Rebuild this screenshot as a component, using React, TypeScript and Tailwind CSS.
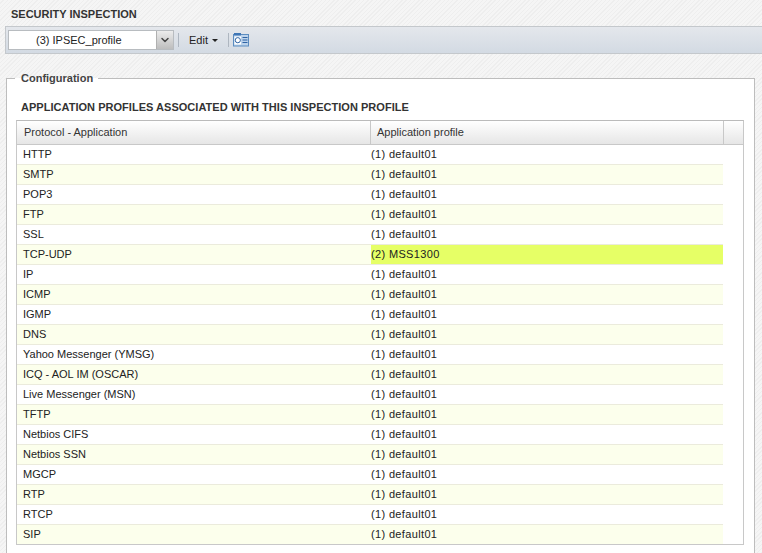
import { ChevronDown } from "lucide-react"

const rows = [
  ["HTTP", "(1) default01"],
  ["SMTP", "(1) default01"],
  ["POP3", "(1) default01"],
  ["FTP", "(1) default01"],
  ["SSL", "(1) default01"],
  ["TCP-UDP", "(2) MSS1300"],
  ["IP", "(1) default01"],
  ["ICMP", "(1) default01"],
  ["IGMP", "(1) default01"],
  ["DNS", "(1) default01"],
  ["Yahoo Messenger (YMSG)", "(1) default01"],
  ["ICQ - AOL IM (OSCAR)", "(1) default01"],
  ["Live Messenger (MSN)", "(1) default01"],
  ["TFTP", "(1) default01"],
  ["Netbios CIFS", "(1) default01"],
  ["Netbios SSN", "(1) default01"],
  ["MGCP", "(1) default01"],
  ["RTP", "(1) default01"],
  ["RTCP", "(1) default01"],
  ["SIP", "(1) default01"],
]

function ProfileIcon() {
  return (
    <svg width="16" height="14" viewBox="0 0 16 14" className="shrink-0">
      <rect x="0.5" y="1.5" width="15" height="11.5" fill="#bcd3ec" stroke="#5b8cc0" />
      <rect x="1" y="0" width="7" height="2.5" fill="#3f76b5" />
      <path d="M1.5 3.5h6.5v8h-6.5z" fill="#ffffff" />
      <circle cx="4.8" cy="7.2" r="2.6" fill="#ffffff" stroke="#2f63a3" />
      <path d="M9.5 4.5h5M9.5 7h5M9.5 9.5h5" stroke="#2f63a3" />
    </svg>
  )
}

export default function App() {
  return (
    <div className="w-[762px] h-[553px] overflow-hidden bg-[repeating-linear-gradient(135deg,#f5f5f5_0px,#f5f5f5_2px,#eeeeee_2px,#eeeeee_3px)] font-['Liberation_Sans',Arial,sans-serif] text-[11px] text-[#222]">
      <div className="h-[26px] pl-[11px] pt-[8px] text-[11px] leading-[13px] font-bold text-[#333]">
        SECURITY INSPECTION
      </div>

      {/* toolbar */}
      <div className="h-[28px] ml-[5px] border-y border-l border-[#c4c8cc] bg-gradient-to-b from-[#e4e7ec] to-[#d3dae3] flex items-center pl-[2px]">
        <div className="w-[166px] h-[20px] bg-white border border-[#b8bcc0] flex items-center">
          <span className="flex-1 pl-[27px] leading-none">(3) IPSEC_profile</span>
          <span className="w-[17px] h-[18px] border-l border-[#b0b0b0] bg-gradient-to-b from-[#ececec] to-[#bdbdbd] flex items-center justify-center">
            <ChevronDown size={12} strokeWidth={3} className="text-[#444]" />
          </span>
        </div>
        <span className="ml-[4px] w-px h-[14px] bg-[#aeb6c0]" />
        <span className="ml-[10px] flex items-center gap-[4px] leading-none">
          Edit
          <span className="w-0 h-0 border-x-[3px] border-x-transparent border-t-[3px] border-t-[#222]" />
        </span>
        <span className="ml-[10px] w-px h-[14px] bg-[#aeb6c0]" />
        <span className="ml-[4px]">
          <ProfileIcon />
        </span>
      </div>

      {/* configuration */}
      <fieldset className="mt-[18px] mx-[6px] w-[749px] h-[600px] bg-white border border-[#bdbdbd] px-[9px] pt-[16px]">
        <legend className="ml-[-1px] px-[5px] pl-[6px] text-[11px] leading-[13px] font-bold text-[#444]">Configuration</legend>
        <div className="text-[11px] leading-[13px] font-bold tracking-[0.03px] text-[#333] ml-[5px] mb-[6px]">
          APPLICATION PROFILES ASSOCIATED WITH THIS INSPECTION PROFILE
        </div>
        <div className="w-[728px] border border-[#c8c8c8] border-t-[#bbb]">
          <div className="h-[24px] flex border-b border-[#c8c8c8] bg-gradient-to-b from-white to-[#e6e6e6] text-[#333]">
            <div className="w-[354px] pl-[7px] flex items-center border-r border-[#c8c8c8]">Protocol - Application</div>
            <div className="w-[353px] pl-[6px] flex items-center border-r border-[#c8c8c8]">Application profile</div>
            <div className="flex-1" />
          </div>
          {rows.map((row, i) => (
            <div key={row[0]} className="w-[706px] h-[20px] flex border-b border-[#ebebdc] last:h-[19px] last:border-b-0">
              <div className={i % 2 === 1 ? "w-[354px] h-[19px] pl-[6px] flex items-center bg-[#fcffec]" : "w-[354px] h-[19px] pl-[6px] flex items-center bg-white"}>
                {row[0]}
              </div>
              <div
                className={
                  row[1] === "(2) MSS1300"
                    ? "flex-1 h-[19px] flex items-center tracking-[0.35px] bg-[#e6ff66]"
                    : i % 2 === 1
                      ? "flex-1 h-[19px] flex items-center tracking-[0.35px] bg-[#fcffec]"
                      : "flex-1 h-[19px] flex items-center tracking-[0.35px] bg-white"
                }
              >
                {row[1]}
              </div>
            </div>
          ))}
        </div>
      </fieldset>
    </div>
  )
}
